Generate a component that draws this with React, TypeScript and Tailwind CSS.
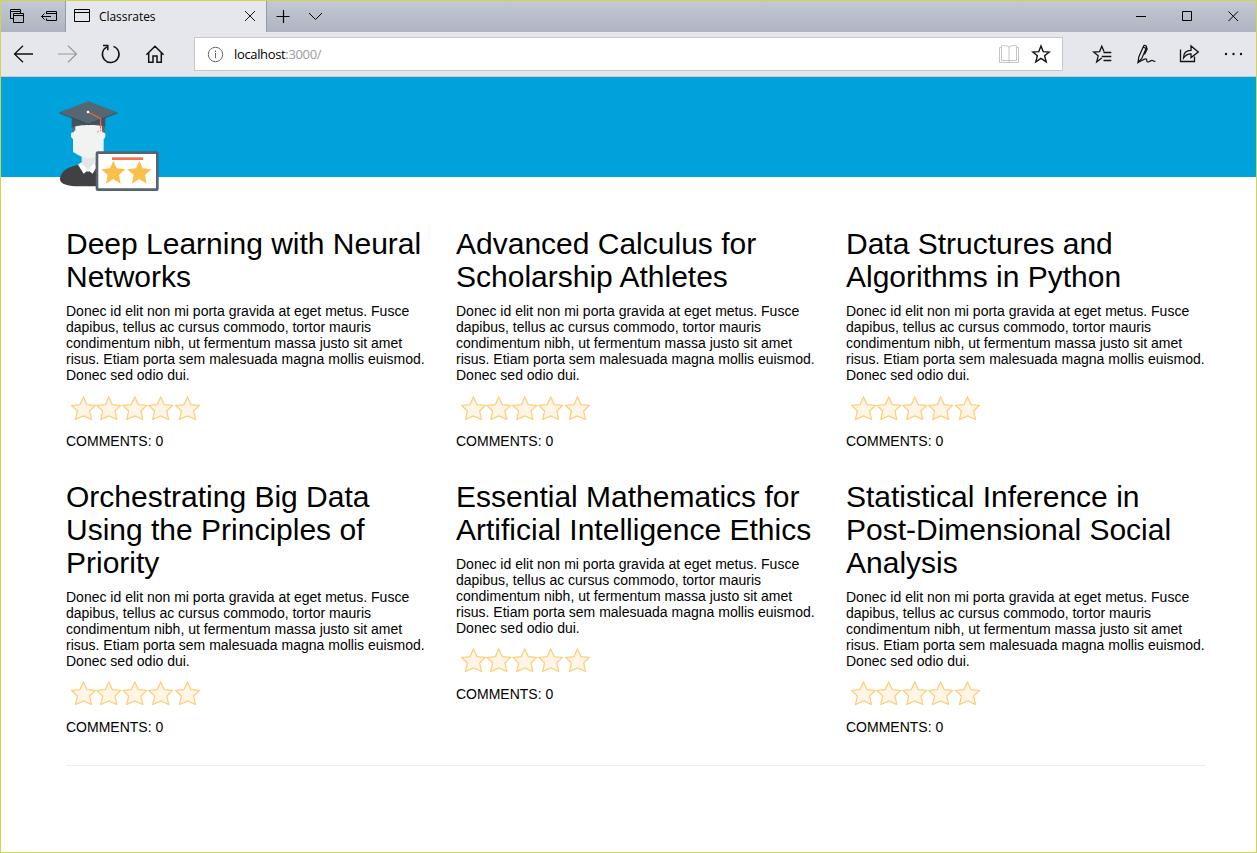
import type { ReactNode } from "react";

const STAR = "M12.5 0.9 L16 8.6 L24.3 9.5 L18.6 15 L20.5 23.5 L12.5 20 L4.5 23.5 L6.4 15 L0.7 9.5 L9 8.6 Z";
const STAR_OFFSETS = [0, 25.3, 51.3, 77.2, 104];

const BLURB =
  "Donec id elit non mi porta gravida at eget metus. Fusce dapibus, tellus ac cursus commodo, tortor mauris condimentum nibh, ut fermentum massa justo sit amet risus. Etiam porta sem malesuada magna mollis euismod. Donec sed odio dui.";

const COURSES = [
  "Deep Learning with Neural Networks",
  "Advanced Calculus for Scholarship Athletes",
  "Data Structures and Algorithms in Python",
  "Orchestrating Big Data Using the Principles of Priority",
  "Essential Mathematics for Artificial Intelligence Ethics",
  "Statistical Inference in Post-Dimensional Social Analysis",
];

function Icon({ w, h, className = "", sw = 1.2, children }: { w: number; h: number; className?: string; sw?: number; children: ReactNode }) {
  return (
    <svg width={w} height={h} viewBox={`0 0 ${w} ${h}`} fill="none" stroke="currentColor" strokeWidth={sw} className={`block shrink-0 ${className}`}>
      {children}
    </svg>
  );
}

function TabStrip() {
  return (
    <div className="flex h-[31px] bg-gradient-to-b from-[#c3c8d4] to-[#afb4c2] text-black">
      <div className="flex w-16 pl-2 pt-[7px]">
        <Icon w={16} h={16} sw={1}>
          <path d="M4.500 10.5H1.5V1.5H11.5V5M1.5 3.5H11.5" />
          <path d="M4.5 5.5H14.5V14.5H4.5ZM4.500 7.5H14.5" />
        </Icon>
        <Icon w={18} h={16} sw={1} className="ml-[15px]">
          <path d="M6.5 6V3.5H16.5V12.5H6.5V10.500M6.5 5.5H16.5M1.5 8.500H11M4.5 5.5L1.5 8.5L4.5 11.5" />
        </Icon>
      </div>
      <div className="flex w-[202px] border-x border-[#969ba8] bg-[#e6e7ec] pl-[7px] pt-[7px]">
        <Icon w={18} h={16} sw={1}>
          <path d="M1.5 1.5H16.5V13.5H1.5ZM1.5 4.5H16.5" />
        </Icon>
        <span className="ml-2 w-[143px] pt-px font-['Open_Sans','Noto_Sans',sans-serif] text-[12px] leading-4 tracking-[-0.05px]">Classrates</span>
        <Icon w={14} h={14} sw={0.9} className="mt-px">
          <path d="M3 2L13 12M13 2L3 12" />
        </Icon>
      </div>
      <Icon w={14} h={14} sw={1.2} className="ml-[9px] mt-2">
        <path d="M0.5 7.5H13.5M7.5 1V14" />
      </Icon>
      <Icon w={14} h={14} sw={1} className="ml-[18px] mt-2">
        <path d="M1 4L7.5 10.5L14 4" />
      </Icon>
      <div className="ml-auto flex pt-2">
        <Icon w={14} h={14} sw={1}>
          <path d="M2 7.5H12" />
        </Icon>
        <Icon w={14} h={14} sw={1} className="ml-8">
          <path d="M2.5 2.5H11.5V11.5H2.5Z" />
        </Icon>
        <Icon w={14} h={14} sw={1} className="ml-8 mr-[16px]">
          <path d="M2.5 2.5L12 12M12 2.5L2.5 12" />
        </Icon>
      </div>
    </div>
  );
}

function Toolbar() {
  return (
    <div className="flex h-[45px] items-center border-b border-[#c9cbd0] bg-[#e6e7ec] pl-3 text-[#111]">
      <Icon w={22} h={20} sw={1.3}>
        <path d="M20 10H1.5M10 1.8L1.5 10L10 18.2" />
      </Icon>
      <Icon w={22} h={20} sw={1.2} className="ml-[22px] text-[#999]">
        <path d="M1 10H19.5M11 1.8L19.5 10L11 18.2" />
      </Icon>
      <Icon w={22} h={22} sw={1.5} className="ml-[21px]">
        <path d="M7 3.8A8.3 8.3 0 1 0 13.5 3.4" />
        <path d="M3 2.5H7.8V7.3" />
      </Icon>
      <Icon w={20} h={20} sw={1.5} className="ml-[23px]">
        <path d="M1.4 10.8L10 2.2L18.6 10.8M3.7 9V18.2H8V12H12V18.2H16.3V9" />
      </Icon>
      <div className="ml-[29px] flex h-[34px] w-[869px] items-center border border-[#c5c7ca] bg-white pl-3">
        <Icon w={17} h={17} sw={1} className="text-[#666]">
          <circle cx="8.5" cy="8.5" r="7.2" />
          <path d="M8.5 7V12.2M8.5 4.5V6" />
        </Icon>
        <span className="ml-[10px] font-['Open_Sans','Noto_Sans',sans-serif] text-[13px] leading-4 tracking-[-0.35px] text-black">
          localhost<span className="text-[#999]">:3000/</span>
        </span>
        <Icon w={22} h={20} sw={1} className="ml-auto text-[#c4c4c4]">
          <path d="M3.5 3.5H1.5V18.5H20.5V3.5H18.5" />
          <path d="M11 3C9 1 5.5 1.5 3.5 1.8V16.5H11M11 3C13 1 16.5 1.5 18.5 1.8V16.5H11M11 3V18.5" />
        </Icon>
        <Icon w={20} h={20} sw={1.4} className="ml-[11px] mr-[11px]">
          <path d="M10 2L12.2 7.6L18.3 8L13.6 11.8L15.2 17.8L10 14.4L4.8 17.8L6.4 11.8L1.7 8L7.8 7.6Z" />
        </Icon>
      </div>
      <Icon w={20} h={20} sw={1.3} className="ml-[29px]">
        <path d="M12 7.500L9.8 2.2L7.6 7.6L1.5 8L6.2 11.8L4.7 17.8L9.8 14M11.500 8.500H19.3M9.7 12.5H19.3M11.500 16.500H19.3" />
      </Icon>
      <Icon w={20} h={20} sw={1.2} className="ml-[24px]">
        <path d="M2 18.5L2.8 13L7.5 2.2C8.200 .8 11 1.5 10.500 3.4L5.8 14.5ZM7.200 3.2L10.3 4.4M10.5 3.500L11.2 5L8.5 10.5" />
        <path d="M2 18.5C6 16.5 8 14.700 10 14.900C12 15.200 9.500 18 12 18C14.500 18 14.500 15.900 16.500 16.500C17.800 17 18 17.800 19.300 17" />
      </Icon>
      <Icon w={21} h={20} sw={1.3} className="ml-[23px]">
        <path d="M1.5 5.5V17.5H15.5V12.5" />
        <path d="M4.5 14C4.5 9 7 6.3 12 6.3V2L19.3 8L12 13.6V9.8C8.5 9.8 6.5 11 4.5 14Z" />
      </Icon>
      <svg width="20" height="6" viewBox="0 0 20 6" fill="currentColor" className="ml-[24px] block shrink-0">
        <circle cx="2" cy="3" r="1.2" />
        <circle cx="9.5" cy="3" r="1.2" />
        <circle cx="17" cy="3" r="1.2" />
      </svg>
    </div>
  );
}

function Logo() {
  return (
    <svg width="120" height="100" viewBox="0 0 360 300" className="block shrink-0">
      <path d="M30 250C34 222 65 214 93 207L143 207L190 230V274H75C48 272 28 266 30 250Z" fill="#414042" />
      <path d="M95 170H138V204L114 232L95 204Z" fill="#e3e5e6" />
      <path d="M94 202L114 226L101 236L84 209ZM134 202L114 226L128 236L140 216Z" fill="#fff" />
      <path d="M67 84H77V128H70L67 110ZM155 84H165V110L162 128H155Z" fill="#5d6872" />
      <path d="M76 84H156V112C163 111 168 116 166 124C165 130 163 132 161 132V172C144 184 130 190 115 190C101 190 87 182 69 171V132C64 130 62 124 63 117C64 113 67 111 71 112L76 104Z" fill="#f1f2f2" />
      <path d="M65 66H166V96C146 88 84 88 65 98Z" fill="#46525d" />
      <path d="M28 52L115 19L202 52L115 86Z" fill="#566673" />
      <path d="M28 52L115 86L202 52V55L115 91L28 55Z" fill="#424e58" />
      <path d="M114 51L152 71V101" fill="none" stroke="#f0653b" strokeWidth="3.5" />
      <circle cx="114" cy="51" r="4" fill="#fff" />
      <path d="M146 107L143 113M152 104V109M156 107L160 113" stroke="#e98769" strokeWidth="3" />
      <rect x="141" y="173" width="181" height="111" rx="2" fill="#fff" stroke="#536472" strokeWidth="8" />
      <rect x="186" y="187" width="93" height="8" fill="#f37250" />
      <path d="M190 197L200 220L226 223L207 240L212 266L190 252L168 266L173 240L154 223L180 220Z" fill="#fbbf4b" />
      <path d="M268 197L278 220L304 223L285 240L290 266L268 252L246 266L251 240L232 223L258 220Z" fill="#fbbf4b" />
    </svg>
  );
}

function Course({ title }: { title: string }) {
  return (
    <article className="w-[390px] px-[15px] pb-[31px] [&:nth-child(n+4)>svg]:mb-[14px] [&:nth-child(n+4)>svg]:mt-3">
      <h2 className="mb-[10px] text-[30px] leading-[33px]">{title}</h2>
      <p className="text-[14px] leading-4">{BLURB}</p>
      <svg width="136" height="24" viewBox="0 0 136 24" className="mb-[13px] ml-[5px] mt-[13px] block">
        {STAR_OFFSETS.map((x) => (
          <path key={x} d={STAR} transform={`translate(${x} 0)`} fill="#fff5e7" stroke="#fbce78" strokeWidth="1.2" />
        ))}
      </svg>
      <p className="text-[14px] leading-4">COMMENTS: 0</p>
    </article>
  );
}

export default function App() {
  return (
    <div className="flex h-[853px] w-full flex-col overflow-hidden border border-[#cfd451] bg-white font-['Liberation_Sans',Arial,sans-serif] text-black">
      <TabStrip />
      <Toolbar />
      <header className="flex h-[100px] shrink-0 bg-[#00a2dc] pl-[49px] pt-[18px]">
        <Logo />
      </header>
      <main className="ml-[50px] mt-[50px] w-[1170px]">
        <div className="flex flex-wrap items-start">
          {COURSES.map((title) => (
            <Course key={title} title={title} />
          ))}
        </div>
        <hr className="mx-[15px] -mt-px border-t border-[#eee]" />
      </main>
    </div>
  );
}
